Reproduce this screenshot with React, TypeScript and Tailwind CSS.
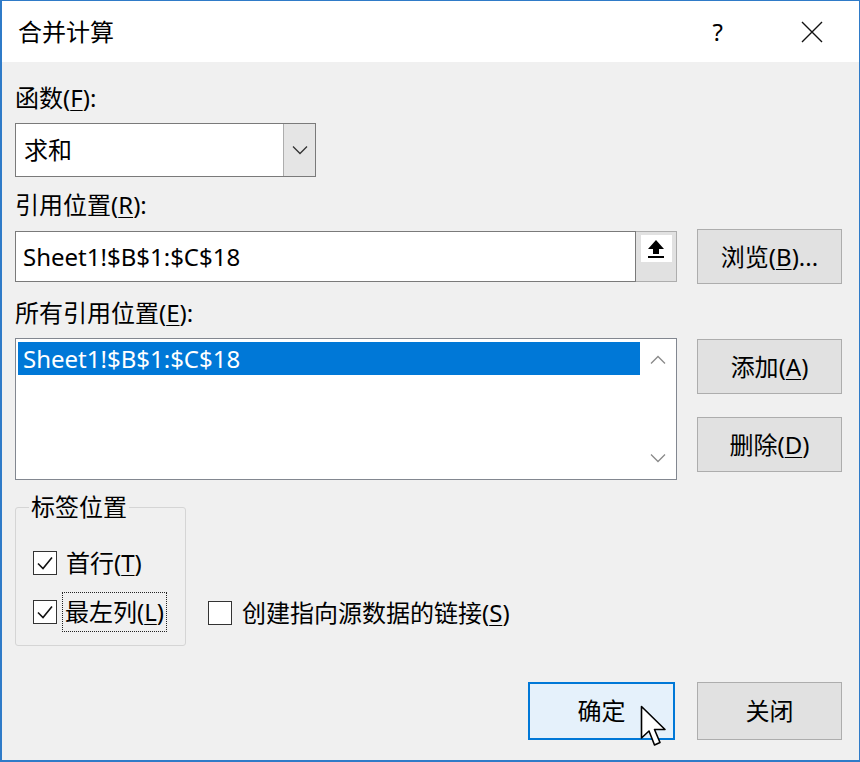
import React from 'react'

const FONT = "font-['Noto_Sans','Noto_Sans_CJK_SC',sans-serif]"

function Key({ k }: { k: string }) {
  return (
    <>
      (<span className="underline underline-offset-[3px] decoration-1">{k}</span>)
    </>
  )
}

function CheckBox({ checked }: { checked: boolean }) {
  return (
    <span className="flex h-[24px] w-[24px] shrink-0 items-center justify-center border-[1.5px] border-[#333] bg-white">
      {checked && (
        <svg width="20" height="20" viewBox="0 0 20 20" fill="none">
          <path d="M3 10.5 L8 15.5 L17 4.5" stroke="#111" strokeWidth="1.6" />
        </svg>
      )}
    </span>
  )
}

function Button({ children, primary, className = '' }: { children: React.ReactNode; primary?: boolean; className?: string }) {
  return (
    <div
      className={
        'flex items-center justify-center text-[24px] text-black ' +
        (primary ? 'border-2 border-[#0078d7] bg-[#e5f1fb] ' : 'border border-[#adadad] bg-[#e1e1e1] ') +
        className
      }
    >
      {children}
    </div>
  )
}

export default function App() {
  return (
    <div className={`relative flex h-[762px] w-[860px] flex-col border-b-2 border-l-2 border-r border-t border-[#2f7bc8] bg-[#f0f0f0] ${FONT}`}>
      {/* title bar */}
      <div className="flex h-[61px] items-center bg-white pl-[16px] text-[24px] text-black">
        <span className="flex-1">合并计算</span>
        <span className="mr-[78px] text-[24px]">?</span>
        <svg width="22" height="22" viewBox="0 0 22 22" className="mr-[36px]">
          <path d="M1 1 L21 21 M21 1 L1 21" stroke="#111" strokeWidth="1.4" />
        </svg>
      </div>

      <div className="flex flex-col pl-[13px] text-[24px] text-black">
        <div className="mt-[21px] h-[30px] leading-[30px]">
          函数<Key k="F" />:
        </div>

        {/* function select */}
        <div className="mt-[10px] flex h-[54px] w-[301px] border border-[#7a7a7a] bg-white">
          <div className="flex flex-1 items-center pl-[8px]">求和</div>
          <div className="flex w-[32px] items-center justify-center border-l border-[#adadad] bg-[#e5e5e5]">
            <svg width="16" height="10" viewBox="0 0 16 10" fill="none">
              <path d="M1 1.5 L8 8.5 L15 1.5" stroke="#333" strokeWidth="1.3" />
            </svg>
          </div>
        </div>

        <div className="mt-[13px] h-[30px] leading-[30px]">
          引用位置<Key k="R" />:
        </div>

        <div className="mt-[9px] flex h-[55px] items-center">
          <div className="flex h-[51px] w-[662px]">
            <div className="flex flex-1 items-center border border-[#7a7a7a] bg-white pl-[7px]">
              Sheet1!$B$1:$C$18
            </div>
            <div className="flex w-[41px] justify-center border border-l-0 border-[#adadad] bg-[#e1e1e1] pt-[3px]">
              <div className="flex h-[27px] w-[31px] items-center justify-center bg-white">
                <svg width="18" height="20" viewBox="0 0 18 20">
                  <path d="M9 1 L17 10 L12 10 L12 15 L6 15 L6 10 L1 10 Z" fill="#000" />
                  <rect x="1" y="17" width="16" height="2" fill="#000" />
                </svg>
              </div>
            </div>
          </div>
          <Button className="ml-[20px] h-[55px] w-[145px]">
            浏览<Key k="B" />...
          </Button>
        </div>

        <div className="mt-[14px] h-[30px] leading-[30px]">
          所有引用位置<Key k="E" />:
        </div>

        <div className="mt-[10px] flex items-start">
          <div className="flex h-[142px] w-[662px] border border-[#828790] bg-white">
            <div className="flex-1 pl-[2px] pt-[3px]">
              <div className="flex h-[33px] items-center bg-[#0078d7] pl-[5px] text-white">
                Sheet1!$B$1:$C$18
              </div>
            </div>
            <div className="flex w-[36px] flex-col items-center justify-between py-[16px]">
              <svg width="16" height="10" viewBox="0 0 16 10" fill="none">
                <path d="M1 8.5 L8 1.5 L15 8.5" stroke="#8a8a8a" strokeWidth="1.3" />
              </svg>
              <svg width="16" height="10" viewBox="0 0 16 10" fill="none">
                <path d="M1 1.5 L8 8.5 L15 1.5" stroke="#8a8a8a" strokeWidth="1.3" />
              </svg>
            </div>
          </div>
          <div className="ml-[20px] flex flex-col">
            <Button className="mt-px h-[55px] w-[145px]">
              添加<Key k="A" />
            </Button>
            <Button className="mt-[23px] h-[55px] w-[145px]">
              删除<Key k="D" />
            </Button>
          </div>
        </div>

        <div className="mt-[14px] flex items-start">
          <fieldset className="h-[152px] w-[171px] rounded-[3px] border border-[#d5d5d5] pl-[17px]">
            <legend className="ml-[-4px] px-[2px] leading-[26px]">标签位置</legend>
            <div className="mt-[24px] flex h-[38px] items-center">
              <CheckBox checked />
              <span className="ml-[9px]">
                首行<Key k="T" />
              </span>
            </div>
            <div className="mt-[10px] flex h-[40px] items-center">
              <CheckBox checked />
              <span className="ml-[5px] flex h-[40px] items-center border border-dotted border-[#222] px-[2px]">
                最左列<Key k="L" />
              </span>
            </div>
          </fieldset>
          <div className="ml-[22px] mt-[101px] flex items-center">
            <CheckBox checked={false} />
            <span className="ml-[10px]">
              创建指向源数据的链接<Key k="S" />
            </span>
          </div>
        </div>

        <div className="mt-[36px] flex pl-[513px]">
          <Button primary className="h-[58px] w-[147px]">
            确定
          </Button>
          <Button className="ml-[22px] h-[58px] w-[145px]">
            关闭
          </Button>
        </div>
      </div>

      {/* mouse cursor */}
      <svg className="absolute left-[638px] top-[704px]" width="28" height="44" viewBox="0 0 28 44">
        <path d="M1.5 1.5 L1.5 33 L9 26 L14.5 40 L20 37.5 L14.5 24.5 L25 24.5 Z" fill="#fff" stroke="#000" strokeWidth="1.6" strokeLinejoin="round" />
      </svg>
    </div>
  )
}
